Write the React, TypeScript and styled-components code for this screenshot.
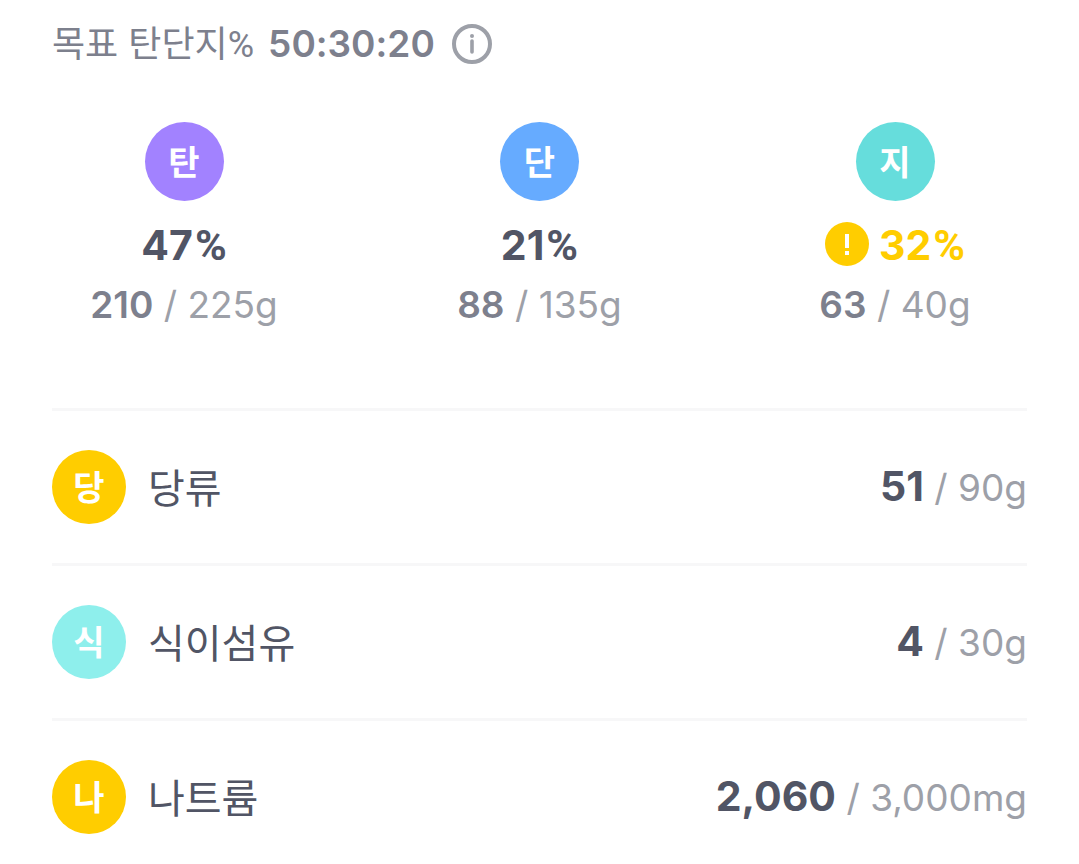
import React from "react";
import styled, { createGlobalStyle } from "styled-components";

const GlobalStyle = createGlobalStyle`
  * { box-sizing: border-box; }
  body {
    margin: 0;
    background: #ffffff;
    color: #515565;
    font-family: Inter, "Noto Sans CJK KR", sans-serif;
  }
  h2, p, ul { margin: 0; padding: 0; font-weight: 400; }
`;

const Page = styled.main`
  padding: 20px 52px;
`;

const Header = styled.header`
  display: flex;
  align-items: center;
  height: 48px;
`;

const Goal = styled.h2`
  font-size: 36px;
  line-height: 48px;
  color: #7d808d;
  white-space: nowrap;
`;

const GoalRatio = styled.strong`
  margin-left: 14px;
  font-size: 37px;
  font-weight: 600;
`;

const PercentSign = styled.span<{ $large?: boolean }>`
  margin-left: ${(p) => (p.$large ? 2 : 0)}px;
  font-family: Roboto, sans-serif;
  font-size: ${(p) => (p.$large ? 43 : 36)}px;
  line-height: 1;
`;

const InfoButton = styled.button`
  display: flex;
  margin-left: 16px;
  padding: 0;
  border: 0;
  background: none;
  cursor: pointer;
`;

const Macros = styled.ul`
  display: flex;
  justify-content: space-between;
  list-style: none;
  margin-top: 54px;
`;

const Macro = styled.li`
  display: flex;
  flex-direction: column;
  align-items: center;
  width: 264px;
`;

const Badge = styled.span<{ $color: string; $size: number }>`
  display: flex;
  align-items: center;
  justify-content: center;
  flex: none;
  width: ${(p) => p.$size}px;
  height: ${(p) => p.$size}px;
  padding-top: 2px;
  border-radius: 50%;
  background: ${(p) => p.$color};
  color: #ffffff;
  font-size: 34px;
  line-height: 48px;
  font-weight: 700;
`;

const Percent = styled.p<{ $over?: boolean }>`
  display: flex;
  align-items: center;
  gap: 10px;
  height: 50px;
  margin-top: 18px;
  font-size: 41px;
  line-height: 48px;
  font-weight: 700;
  color: ${(p) => (p.$over ? "#ffcd00" : "#515565")};
`;

const PercentValue = styled.span`
  padding-top: 2px;
`;

const Amount = styled.p`
  margin-top: 12px;
  font-size: 37px;
  line-height: 48px;
  color: #9da0a8;
  white-space: nowrap;
`;

const Current = styled.strong<{ $large?: boolean }>`
  font-size: ${(p) => (p.$large ? 41 : 37)}px;
  font-weight: ${(p) => (p.$large ? 700 : 600)};
  color: ${(p) => (p.$large ? "#515565" : "#7d808d")};
`;

const Nutrients = styled.ul`
  list-style: none;
  margin-top: 79px;
`;

const Nutrient = styled.li`
  display: flex;
  align-items: center;
  height: 155px;
  border-top: 3px solid #f7f7f8;
`;

const NutrientName = styled.span`
  flex: 1;
  margin-left: 22px;
  padding-top: 4px;
  font-size: 40px;
  line-height: 48px;
`;

const NutrientAmount = styled(Amount)`
  margin: 0;
`;

const InfoIcon = () => (
  <svg width="42" height="42" viewBox="0 0 42 42" fill="none" aria-hidden="true">
    <circle cx="21" cy="21" r="18" stroke="#9da0a8" strokeWidth="4" />
    <circle cx="21" cy="13" r="2" fill="#9da0a8" />
    <path d="M21 18V29" stroke="#9da0a8" strokeWidth="3.6" strokeLinecap="round" />
  </svg>
);

const WarningIcon = () => (
  <svg width="44" height="44" viewBox="0 0 44 44" role="img" aria-label="초과">
    <circle cx="22" cy="22" r="22" fill="#ffcd00" />
    <path d="M22 12V26" stroke="#fff" strokeWidth="4" />
    <path d="M22 29V33" stroke="#fff" strokeWidth="4" />
  </svg>
);

const macros = [
  { label: "탄", color: "#a282ff", percent: 47, current: "210", goal: "225g" },
  { label: "단", color: "#66abff", percent: 21, current: "88", goal: "135g" },
  { label: "지", color: "#66dddc", percent: 32, current: "63", goal: "40g", over: true },
];

const nutrients = [
  { label: "당", color: "#ffcd00", name: "당류", current: "51", goal: "90g" },
  { label: "식", color: "#8eefec", name: "식이섬유", current: "4", goal: "30g" },
  { label: "나", color: "#ffcd00", name: "나트륨", current: "2,060", goal: "3,000mg" },
];

export default function App() {
  return (
    <>
      <GlobalStyle />
      <Page>
        <Header>
          <Goal>
            목표 탄단지<PercentSign>%</PercentSign>
            <GoalRatio>50:30:20</GoalRatio>
          </Goal>
          <InfoButton type="button" aria-label="정보">
            <InfoIcon />
          </InfoButton>
        </Header>
        <Macros>
          {macros.map((m) => (
            <Macro key={m.label}>
              <Badge $color={m.color} $size={79}>{m.label}</Badge>
              <Percent $over={m.over}>
                {m.over && <WarningIcon />}
                <PercentValue>
                  {m.percent}
                  <PercentSign $large>%</PercentSign>
                </PercentValue>
              </Percent>
              <Amount>
                <Current>{m.current}</Current> / {m.goal}
              </Amount>
            </Macro>
          ))}
        </Macros>
        <Nutrients>
          {nutrients.map((n) => (
            <Nutrient key={n.label}>
              <Badge $color={n.color} $size={74}>{n.label}</Badge>
              <NutrientName>{n.name}</NutrientName>
              <NutrientAmount>
                <Current $large>{n.current}</Current> / {n.goal}
              </NutrientAmount>
            </Nutrient>
          ))}
        </Nutrients>
      </Page>
    </>
  );
}
